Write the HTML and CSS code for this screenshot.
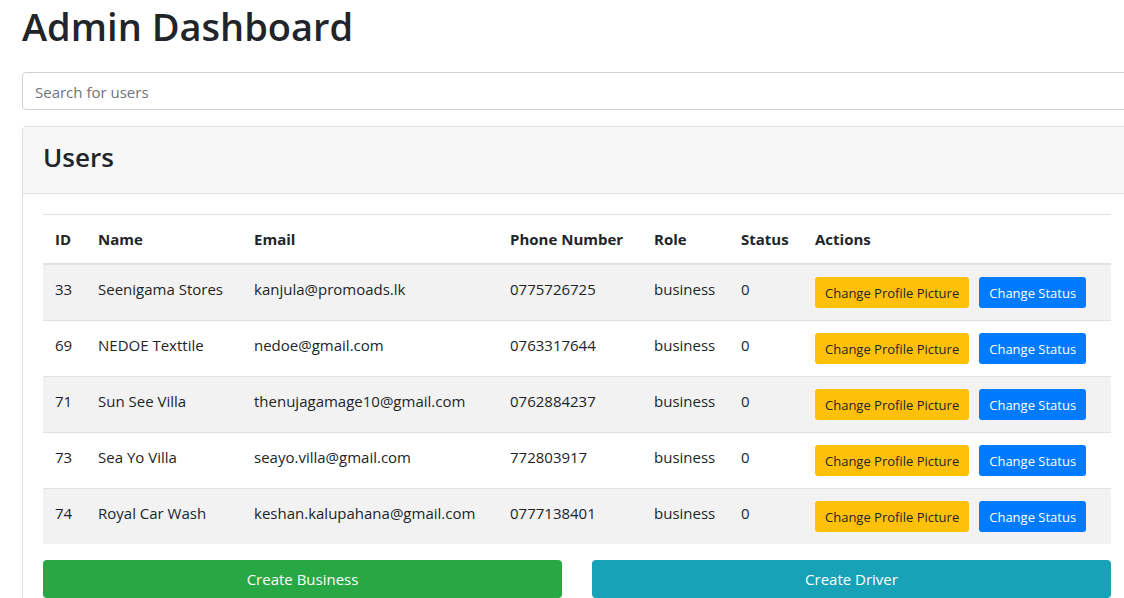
FILE: index.html
```html
<!DOCTYPE html>
<html lang="en">
<head>
<meta charset="utf-8">
<title>Admin Dashboard</title>
<link rel="stylesheet" href="styles.css">
</head>
<body>
<main class="container">
  <h1 class="title">Admin Dashboard</h1>
  <input class="search" type="text" placeholder="Search for users" aria-label="Search for users">
  <section class="card">
    <header class="card-header"><h2 class="card-title">Users</h2></header>
    <div class="card-body">
      <table class="table">
        <colgroup><col class="c-id"><col class="c-name"><col class="c-email"><col class="c-phone"><col class="c-role"><col class="c-status"><col></colgroup>
        <thead>
          <tr><th>ID</th><th>Name</th><th>Email</th><th>Phone Number</th><th>Role</th><th>Status</th><th>Actions</th></tr>
        </thead>
        <tbody>
          <tr><td>33</td><td>Seenigama Stores</td><td>kanjula@promoads.lk</td><td>0775726725</td><td>business</td><td>0</td><td><div class="actions"><button type="button" class="btn btn-sm warning">Change Profile Picture</button><button type="button" class="btn btn-sm primary">Change Status</button></div></td></tr>
          <tr><td>69</td><td>NEDOE Texttile</td><td>nedoe@gmail.com</td><td>0763317644</td><td>business</td><td>0</td><td><div class="actions"><button type="button" class="btn btn-sm warning">Change Profile Picture</button><button type="button" class="btn btn-sm primary">Change Status</button></div></td></tr>
          <tr><td>71</td><td>Sun See Villa</td><td>thenujagamage10@gmail.com</td><td>0762884237</td><td>business</td><td>0</td><td><div class="actions"><button type="button" class="btn btn-sm warning">Change Profile Picture</button><button type="button" class="btn btn-sm primary">Change Status</button></div></td></tr>
          <tr><td>73</td><td>Sea Yo Villa</td><td>seayo.villa@gmail.com</td><td>772803917</td><td>business</td><td>0</td><td><div class="actions"><button type="button" class="btn btn-sm warning">Change Profile Picture</button><button type="button" class="btn btn-sm primary">Change Status</button></div></td></tr>
          <tr><td>74</td><td>Royal Car Wash</td><td>keshan.kalupahana@gmail.com</td><td>0777138401</td><td>business</td><td>0</td><td><div class="actions"><button type="button" class="btn btn-sm warning">Change Profile Picture</button><button type="button" class="btn btn-sm primary">Change Status</button></div></td></tr>
        </tbody>
      </table>
      <div class="create">
        <button type="button" class="btn success">Create Business</button>
        <button type="button" class="btn info">Create Driver</button>
      </div>
    </div>
  </section>
</main>
</body>
</html>
```
FILE: styles.css
```css
*, *::before, *::after { box-sizing: border-box; }

html { overflow: hidden; }

body {
  margin: 0;
  background: #fff;
  color: #212529;
  font-family: "Segoe UI", "Open Sans", "Noto Sans", sans-serif;
  font-size: 15px;
  line-height: 24px;
}

.container {
  margin-right: -8px;
  padding-left: 22px;
}

.title {
  margin: 0;
  padding-bottom: 20px;
  font-size: 38px;
  font-weight: 600;
  line-height: 52px;
}

.search {
  display: block;
  width: 100%;
  height: 38px;
  margin-bottom: 16px;
  padding: 7px 12px 5px;
  border: 1px solid #ced4da;
  border-radius: 4px;
  background: #fff;
  color: #495057;
  font: inherit;
}

.search::placeholder { color: #6c757d; opacity: 1; }

.card {
  border: 1px solid #dfdfdf;
  border-radius: 4px;
}

.card-header {
  padding: 13px 20px 19px;
  border-bottom: 1px solid #dfdfdf;
  background: #f7f7f7;
}

.card-title {
  margin: 0;
  font-size: 26px;
  font-weight: 600;
  line-height: 34px;
}

.card-body { padding: 20px; }

.table {
  width: 100%;
  margin-bottom: 16px;
  border-collapse: collapse;
  table-layout: fixed;
}

.c-id { width: 43px; }
.c-name { width: 156px; }
.c-email { width: 256px; }
.c-phone { width: 144px; }
.c-role { width: 87px; }
.c-status { width: 74px; }

.table th,
.table td {
  padding: 12px;
  border-top: 1px solid #dee2e6;
  text-align: left;
  vertical-align: top;
  white-space: nowrap;
}

.table th {
  border-bottom: 2px solid #dee2e6;
  font-weight: 700;
}

.table tbody tr:nth-child(odd) { background: #f2f2f2; }

.actions { display: flex; gap: 10px; }

.btn {
  padding: 6px 12px;
  border: 1px solid transparent;
  border-radius: 4px;
  color: #fff;
  font: inherit;
  text-align: center;
  white-space: nowrap;
  cursor: pointer;
}

.btn-sm {
  padding: 5px 9px 3px;
  border-radius: 3px;
  font-size: 13px;
  line-height: 21px;
}

.warning { background: #ffc107; color: #212529; }
.primary { background: #007bff; }
.success { background: #28a745; }
.info { background: #17a2b8; }

.create {
  display: grid;
  grid-template-columns: 1fr 1fr;
  gap: 30px;
}
```
